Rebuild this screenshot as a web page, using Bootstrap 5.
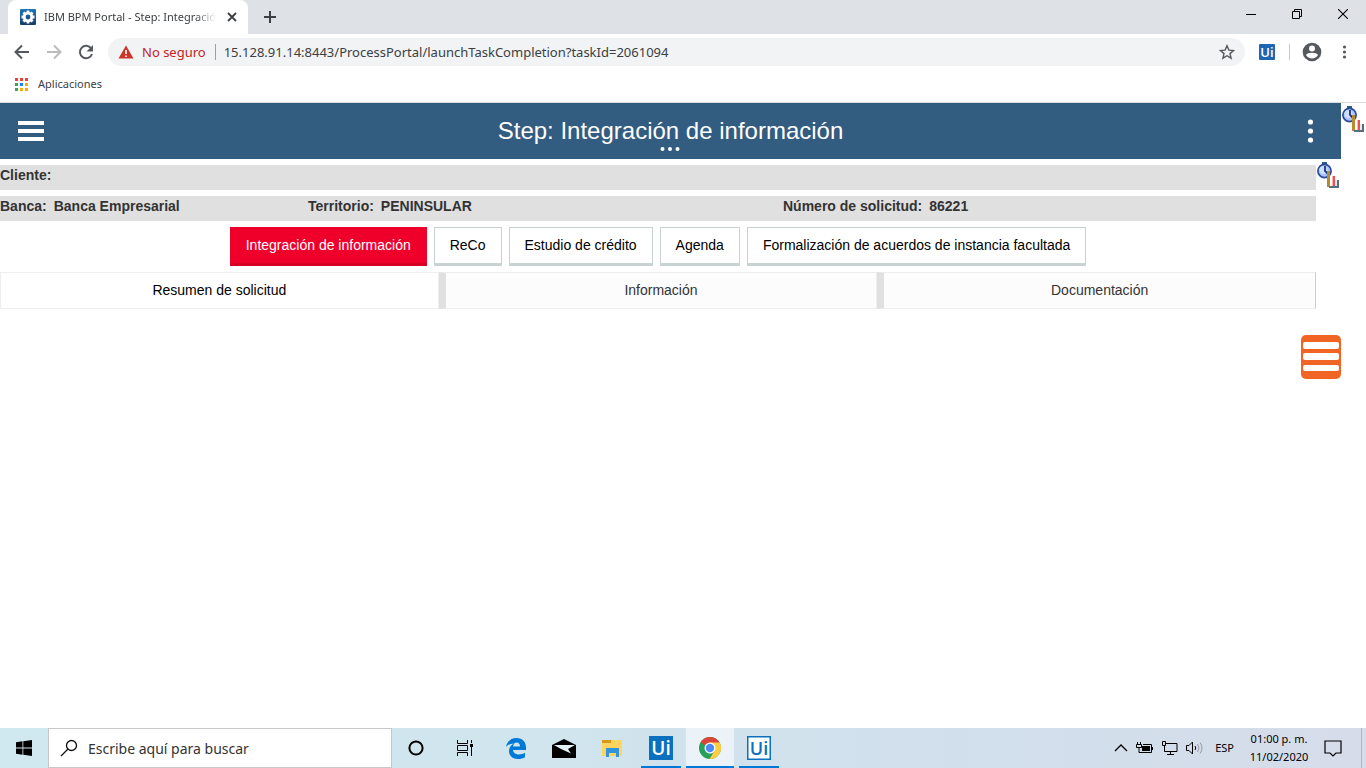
<!DOCTYPE html>
<html lang="es">
<head>
<meta charset="utf-8">
<meta name="viewport" content="width=device-width, initial-scale=1">
<title>IBM BPM Portal - Step: Integración de información</title>
<link href="https://cdn.jsdelivr.net/npm/bootstrap@5.3.0/dist/css/bootstrap.min.css" rel="stylesheet">
<style>
body{font-family:"Liberation Sans",Arial,sans-serif;font-size:14px;line-height:20px;color:#333;background:#fff}
svg{display:block;flex:none}
button{flex:none}
.chrome-ui,.taskbar{font-family:"Noto Sans","Open Sans",sans-serif}
.plain{background:none;border:0;padding:0;color:inherit}
.tabstrip{height:34px;background:#dee1e6}
.browser-tab{width:240px;height:34px;margin-left:8px;padding:0 10px 0 12px;background:#fff;border-radius:8px 8px 0 0;color:#3c4043;font-size:11px}
.tab-title{margin-left:8px;white-space:nowrap;-webkit-mask-image:linear-gradient(90deg,#000 88%,transparent);mask-image:linear-gradient(90deg,#000 88%,transparent)}
.new-tab{margin-left:16px}
.win-btn{width:46px;height:28px;display:flex;align-items:center;justify-content:center;color:#000}
.toolbar{height:36px;padding:0 14px}
.omnibox{height:28px;border-radius:14px;background:#f1f3f4;padding:0 10px;margin:0 14px}
.unsafe{color:#c5221f;font-size:13px;padding-right:9px;border-right:1px solid #9aa0a6;line-height:16px}
.address{background:none;border:0;padding:0;outline:0;font-size:13px;color:#3c4043;min-width:0}
.tool-sep{width:1px;height:16px;background:#c8cacd;margin:0 12px 0 14px}
.bookmarks{height:33px;padding:0 15px 4px;border-bottom:1px solid #dadce0;font-size:11px;color:#3c4043}
.bookmarks a{color:inherit}
.step-bar{height:56px;background:#325c80;color:#fff;padding:0 18px}
.step-bar h1{font-size:24px;line-height:28px;margin:0;position:relative}
.step-more{position:absolute;left:0;right:0;top:28px;display:flex;justify-content:center}
.side-gutter{width:25px;flex:none;padding:3px 1px}
.info-strip{background:#e0e0e0;height:25px;font-weight:700;margin-top:6px}
.info-cols{display:grid;grid-template-columns:308fr 475fr 533fr}
.info-cols dl{display:flex;gap:7px;margin:0}
.info-cols dt,.info-cols dd{margin:0}
.stage-nav{gap:7px;margin:6px 0}
.stage{height:39px;padding:0 15px 2px;border:1px solid #c8d2d2;border-bottom-width:3px;border-radius:0;background:#fff;color:#000}
.stage.current{background:#ee002a;border-color:#ee002a;border-bottom-color:#d60025;color:#fff}
.section-tab{height:37px;border:1px solid #eee;border-radius:0;background:#fcfcfc;color:#333;padding:0 0 2px;width:100%}
.section-tabs .col + .col .section-tab{border-left:7px solid #e0e0e0}
.section-tabs .col:first-child .section-tab{background:#fff;color:#000}
.section-tabs .col:last-child .section-tab{border-right-color:#ccc}
.drawer-btn{width:40px;height:44px;border-radius:5px;background:#f06424;border:0;padding:0;margin-top:26px}
.taskbar{height:40px;background:linear-gradient(90deg,#d0e8ef 0,#d0e5ee 40%,#d1dfec 70%,#d6dcea);color:#000}
.task-btn{height:40px;display:flex;align-items:center;justify-content:center;background:none;border:0;padding:0}
.w40{width:40px;margin:0 5px}.w48{width:48px}
.running{border-bottom:2px solid #0078d7;padding-top:2px}
.active-app{background:#ecf3f8}
.search-box{width:344px;height:40px;background:#fff;border:1px solid #c8c8c8;padding:0 11px}
.search-box input{border:0;outline:0;padding:2px 0 0;font-size:14px;width:100%;min-width:0}
.search-box input::placeholder{color:#333;opacity:1}
.tray{font-size:11px;line-height:18px}
.clock{width:66px;text-align:center}
.notice{margin:0 19px 0 12px}
.peek{width:5px;height:40px;border-left:1px solid #b0b8c4}
</style>
</head>
<body>
<svg width="0" height="0" class="position-absolute" aria-hidden="true">
  <symbol id="stopwatch" viewBox="0 0 23 27">
    <path d="M5 0h5v2H5zM6 2h3v2H6z" fill="#2b6080"/>
    <circle cx="7.500" cy="9" r="6.600" fill="#a9c4ff" stroke="#2b4c99" stroke-width="1.700"/>
    <circle cx="6.500" cy="8" r="4" fill="#cfdfff"/>
    <path d="M8 4v5l3 3" fill="none" stroke="#16367c" stroke-width="1.800"/>
    <path d="M10 9h3v16h-3z" fill="#b88a32"/>
    <path d="M15 14h3v11h-3z" fill="#f25050"/><path d="M15 14h1v11h-1z" fill="#ffb0b0"/>
    <path d="M20 18h2v7h-2zM12 24h10v2H12z" fill="#547080"/>
    <path d="M18 18h2v6h-2z" fill="#e4ecf0"/>
  </symbol>
</svg>
<div class="d-flex flex-column min-vh-100">
  <header class="chrome-ui">
    <div class="tabstrip d-flex align-items-center">
      <div class="browser-tab d-flex align-items-center">
        <svg width="16" height="16" viewBox="0 0 16 16"><defs><linearGradient id="gearBg" x2="0" y2="1"><stop stop-color="#1e76b8"/><stop offset="1" stop-color="#173e66"/></linearGradient></defs><rect width="16" height="16" rx="1" fill="url(#gearBg)"/><circle cx="8" cy="8" r="3.800" fill="none" stroke="#fff" stroke-width="2.800"/><path d="M8 1.500v2M8 12.500v2M1.500 8h2M12.500 8h2M3.400 3.400l1.400 1.400M11.200 11.200l1.400 1.400M3.400 12.600l1.400-1.400M11.200 4.800l1.400-1.400" stroke="#fff" stroke-width="2.800"/></svg>
        <span class="tab-title">IBM BPM Portal - Step: Integració</span>
        <button class="plain ms-auto" aria-label="Cerrar pestaña"><svg width="12" height="12" viewBox="0 0 12 12"><path d="M2 2l8 8M10 2l-8 8" stroke="#3c4043" stroke-width="1.800"/></svg></button>
      </div>
      <button class="plain new-tab" aria-label="Nueva pestaña"><svg width="12" height="12" viewBox="0 0 12 12"><path d="M6 0v12M0 6h12" stroke="#3c4043" stroke-width="2"/></svg></button>
      <div class="d-flex ms-auto align-self-start">
        <button class="plain win-btn" aria-label="Minimizar"><svg width="10" height="10"><path d="M0 5.500h10" stroke="#000"/></svg></button>
        <button class="plain win-btn" aria-label="Restaurar"><svg width="10" height="10" fill="none" stroke="#000"><path d="M.5 2.500h7v7h-7zM2.500 2.500v-2h7v7h-2"/></svg></button>
        <button class="plain win-btn" aria-label="Cerrar"><svg width="10" height="10"><path d="M0 0l10 10M10 0L0 10" stroke="#000" stroke-width="1.100"/></svg></button>
      </div>
    </div>
    <div class="toolbar d-flex align-items-center">
      <button class="plain" aria-label="Atrás"><svg width="16" height="16" viewBox="0 0 16 16" fill="none" stroke="#55585d" stroke-width="2"><path d="M15 8H2M8 1.500L1.500 8 8 14.500"/></svg></button>
      <button class="plain ms-3" aria-label="Adelante"><svg width="16" height="16" viewBox="0 0 16 16" fill="none" stroke="#bbb" stroke-width="2"><path d="M1 8h13M8 1.500L14.500 8 8 14.500"/></svg></button>
      <button class="plain ms-3" aria-label="Recargar"><svg width="16" height="16" viewBox="0 0 16 16"><path d="M13.200 4.500A6.200 6.200 0 1 0 14 10" fill="none" stroke="#55585d" stroke-width="2"/><path d="M15 1v6.500H8.500z" fill="#55585d"/></svg></button>
      <div class="omnibox d-flex align-items-center flex-fill">
        <svg width="16" height="14" viewBox="0 0 16 14"><path d="M8 .5L15.500 13.500H.5z" fill="#cc3428"/><path d="M8 5v4M8 10.500v1.500" stroke="#fff" stroke-width="1.600"/></svg>
        <span class="unsafe ms-2">No seguro</span>
        <input class="address flex-fill ms-2" aria-label="Dirección" value="15.128.91.14:8443/ProcessPortal/launchTaskCompletion?taskId=2061094">
        <button class="plain" aria-label="Marcador"><svg width="16" height="16" viewBox="0 0 16 16"><path d="M8 1.800l1.900 4.300 4.700.4-3.600 3.100 1.100 4.600L8 11.700l-4.100 2.500L5 9.600 1.400 6.500l4.700-.4z" fill="none" stroke="#55585d" stroke-width="1.400"/></svg></button>
      </div>
      <svg width="16" height="16" viewBox="0 0 16 16"><rect width="16" height="16" rx="1" fill="#1f66b2"/><text x="8" y="13" text-anchor="middle" font-family="Open Sans" font-size="13" font-weight="600" fill="#fff">Ui</text></svg>
      <span class="tool-sep"></span>
      <button class="plain" aria-label="Perfil"><svg width="20" height="20" viewBox="0 0 20 20"><circle cx="10" cy="10" r="9.300" fill="#55585d"/><circle cx="10" cy="6.500" r="3" fill="#fff"/><path d="M4 13c1.500-3 10.500-3 12 0-2.500 4.500-9.500 4.500-12 0z" fill="#fff"/></svg></button>
      <button class="plain ms-3" aria-label="Menú"><svg width="14" height="16" viewBox="0 0 14 16" fill="#55585d"><circle cx="6.500" cy="3" r="1.600"/><circle cx="6.500" cy="8" r="1.600"/><circle cx="6.500" cy="13" r="1.600"/></svg></button>
    </div>
    <nav class="bookmarks d-flex align-items-center">
      <a href="#" class="d-flex align-items-center text-decoration-none"><svg class="me-2" width="15" height="13" viewBox="0 0 15 13"><path d="M0 0h3v3H0zM5 0h3v3H5zM10 0h3v3h-3z" fill="#ea4335"/><path d="M0 5h3v3H0zM0 10h3v3H0z" fill="#34a853"/><path d="M5 5h3v3H5z" fill="#1a84ff"/><path d="M10 5h3v3h-3zM5 10h3v3H5zM10 10h3v3h-3z" fill="#f9ab00"/></svg>Aplicaciones</a>
    </nav>
  </header>

  <main class="d-flex flex-fill">
    <div class="flex-fill">
      <div class="step-bar d-flex align-items-center justify-content-between">
        <button class="plain" aria-label="Navegación"><svg width="26" height="22" viewBox="0 0 26 22" fill="#fff"><path d="M0 1h26v4H0zM0 9h26v4H0zM0 17h26v4H0z"/></svg></button>
        <h1 class="fw-normal">Step: Integración de información<span class="step-more"><svg width="20" height="6" fill="#fff"><circle cx="2.500" cy="4" r="2"/><circle cx="10" cy="4" r="2"/><circle cx="17.500" cy="4" r="2"/></svg></span></h1>
        <button class="plain" aria-label="Opciones"><svg width="26" height="26" fill="#fff"><circle cx="13.500" cy="4" r="2.600"/><circle cx="13.500" cy="13" r="2.600"/><circle cx="13.500" cy="22" r="2.600"/></svg></button>
      </div>
      <div class="d-flex">
        <div class="flex-fill">
          <div class="info-strip">Cliente:</div>
          <div class="info-strip info-cols">
            <dl><dt>Banca:</dt><dd>Banca Empresarial</dd></dl>
            <dl><dt>Territorio:</dt><dd>PENINSULAR</dd></dl>
            <dl><dt>Número de solicitud:</dt><dd>86221</dd></dl>
          </div>
          <div class="stage-nav d-flex justify-content-center">
            <button class="stage current">Integración de información</button>
            <button class="stage">ReCo</button>
            <button class="stage">Estudio de crédito</button>
            <button class="stage">Agenda</button>
            <button class="stage">Formalización de acuerdos de instancia facultada</button>
          </div>
          <div class="section-tabs row row-cols-3 g-0">
            <div class="col"><button class="section-tab">Resumen de solicitud</button></div>
            <div class="col"><button class="section-tab">Información</button></div>
            <div class="col"><button class="section-tab">Documentación</button></div>
          </div>
        </div>
        <div class="side-gutter"><svg width="23" height="27"><use href="#stopwatch"/></svg></div>
      </div>
      <div class="d-flex justify-content-end">
        <button class="drawer-btn" aria-label="Panel"><svg width="40" height="44" fill="#fff"><rect x="2" y="7" width="36" height="7" rx="2"/><rect x="2" y="18" width="36" height="7" rx="2"/><rect x="2" y="30" width="36" height="6" rx="2"/></svg></button>
      </div>
    </div>
    <div class="side-gutter"><svg width="23" height="27"><use href="#stopwatch"/></svg></div>
  </main>

  <footer class="taskbar d-flex align-items-center">
    <button class="task-btn w48" aria-label="Inicio"><svg width="16" height="16" viewBox="0 0 16 16"><path d="M0 2.200l6.500-.9v6.300H0zM7.300 1.200L16 0v7.600H7.300zM0 8.400h6.500v6.300L0 13.800zM7.300 8.400H16V16l-8.700-1.200z"/></svg></button>
    <div class="search-box d-flex align-items-center gap-2">
      <svg width="20" height="18" viewBox="0 0 20 18" fill="none" stroke="#111" stroke-width="1.300"><circle cx="11.500" cy="6.500" r="5"/><path d="M8 10l-7 7"/></svg>
      <input type="text" placeholder="Escribe aquí para buscar" aria-label="Buscar">
    </div>
    <button class="task-btn w48" aria-label="Cortana"><svg width="16" height="16"><circle cx="8" cy="8" r="6.600" fill="none" stroke="#000" stroke-width="2"/></svg></button>
    <button class="task-btn w48" aria-label="Vista de tareas"><svg width="17" height="16" viewBox="0 0 17 16" fill="none" stroke="#000"><path d="M1.500 0v3.500h10V0M1.500 5.500h10v5h-10zM1.500 16v-3.500h10V16M15.500 0v3M15.500 7v9"/><path d="M14 4h3v3h-3z" fill="#000" stroke="none"/></svg></button>
    <button class="task-btn w48 ms-1" aria-label="Edge"><svg width="20" height="21" viewBox="0 0 20 21"><path d="M0 9C1 3.500 5 0 10.500 0 16.500 0 20 4 20 9.500V12H7c.3 3 3 4.500 6 4.500 2.300 0 4.300-.7 6-1.700v4.400c-2 1.200-4.300 1.800-7 1.800C6.500 21 3 17.500 3 13c0-3.500 2-6.300 5-7.600C4.800 5.500 2 6.500 0 9zm7-.5h7c0-2.500-1.300-4-3.400-4S7.300 6.300 7 8.500z" fill="#0078d7"/></svg></button>
    <button class="task-btn w48" aria-label="Correo"><svg width="24" height="19" viewBox="0 0 24 19"><path d="M0 6L12 0l12 6v13H0z"/><path d="M2 6h21l-7 4 3 4.500L9 10z" fill="#e3f2f7"/></svg></button>
    <button class="task-btn w48" aria-label="Explorador"><svg width="22" height="19" viewBox="0 0 22 19"><path d="M1 1h9v4H1z" fill="#d99a13"/><path d="M10 1h11v3H10zM1 4h20v13H1z" fill="#ffd560"/><path d="M5 9h13v9h-3v-4H8v4H5z" fill="#3295dc"/></svg></button>
    <button class="task-btn w40 running" aria-label="UiPath Studio"><svg width="24" height="24"><rect width="24" height="24" fill="#0b70bd"/><text x="12" y="19" text-anchor="middle" font-family="Open Sans" font-size="19" font-weight="600" fill="#fff">Ui</text></svg></button>
    <button class="task-btn w48 running active-app" aria-label="Chrome"><svg width="22" height="22" viewBox="0 0 22 22"><circle cx="11" cy="11" r="11" fill="#26a05a"/><path d="M11 11L1.500 5.500a11 11 0 0 1 19 0z" fill="#dc4437"/><path d="M11 5.500h9.500A11 11 0 0 1 10.500 22L16 13z" fill="#ffcd40"/><circle cx="11" cy="11" r="5.500" fill="#fff"/><circle cx="11" cy="11" r="4.200" fill="#4c8bf5"/></svg></button>
    <button class="task-btn w40 running" aria-label="UiPath Robot"><svg width="24" height="24"><rect width="24" height="24" fill="#0b70bd"/><rect x="1.500" y="1.500" width="21" height="21" fill="#fff"/><text x="12" y="19" text-anchor="middle" font-family="Open Sans" font-size="18" font-weight="600" fill="#0b70bd">Ui</text></svg></button>
    <div class="tray d-flex align-items-center ms-auto">
      <button class="plain me-2" aria-label="Iconos ocultos"><svg width="14" height="10" fill="none" stroke="#000" stroke-width="1.300"><path d="M1 8l6-6 6 6"/></svg></button>
      <svg class="me-2" width="17" height="14" viewBox="0 0 17 14"><path d="M6 5h8v5H6z" fill="#000"/><path d="M1.500 1v2M4.500 1v2M.5 3.500h5v3h-5zM3 6.500v5h12.500v-8H7M16.500 6v3" fill="none" stroke="#000"/></svg>
      <svg class="me-2" width="17" height="14" viewBox="0 0 17 14" fill="none" stroke="#000"><path d="M5 2.500h11v8H3.500V5M6 13.500h7M9.500 10.500v3M1.500.5h3v4h-3z"/></svg>
      <svg width="17" height="14" viewBox="0 0 17 14" fill="none" stroke="#000"><path d="M.5 4.500H3L6.500 1v12L3 9.500H.5zM9 5q1.500 2 0 4"/><path d="M11.500 3q3 4 0 8M14 1.500q4 5.500 0 11" stroke="#999"/></svg>
      <span class="mx-2 px-1">ESP</span>
      <div class="clock">01:00 p. m.<br>11/02/2020</div>
      <button class="plain notice" aria-label="Notificaciones"><svg width="18" height="17" fill="none" stroke="#000" stroke-width="1.200"><path d="M1 1h16v12h-5l-3 3-3-3H1z"/></svg></button>
      <span class="peek"></span>
    </div>
  </footer>
</div>
<script src="https://cdn.jsdelivr.net/npm/bootstrap@5.3.0/dist/js/bootstrap.bundle.min.js"></script>
</body>
</html>
